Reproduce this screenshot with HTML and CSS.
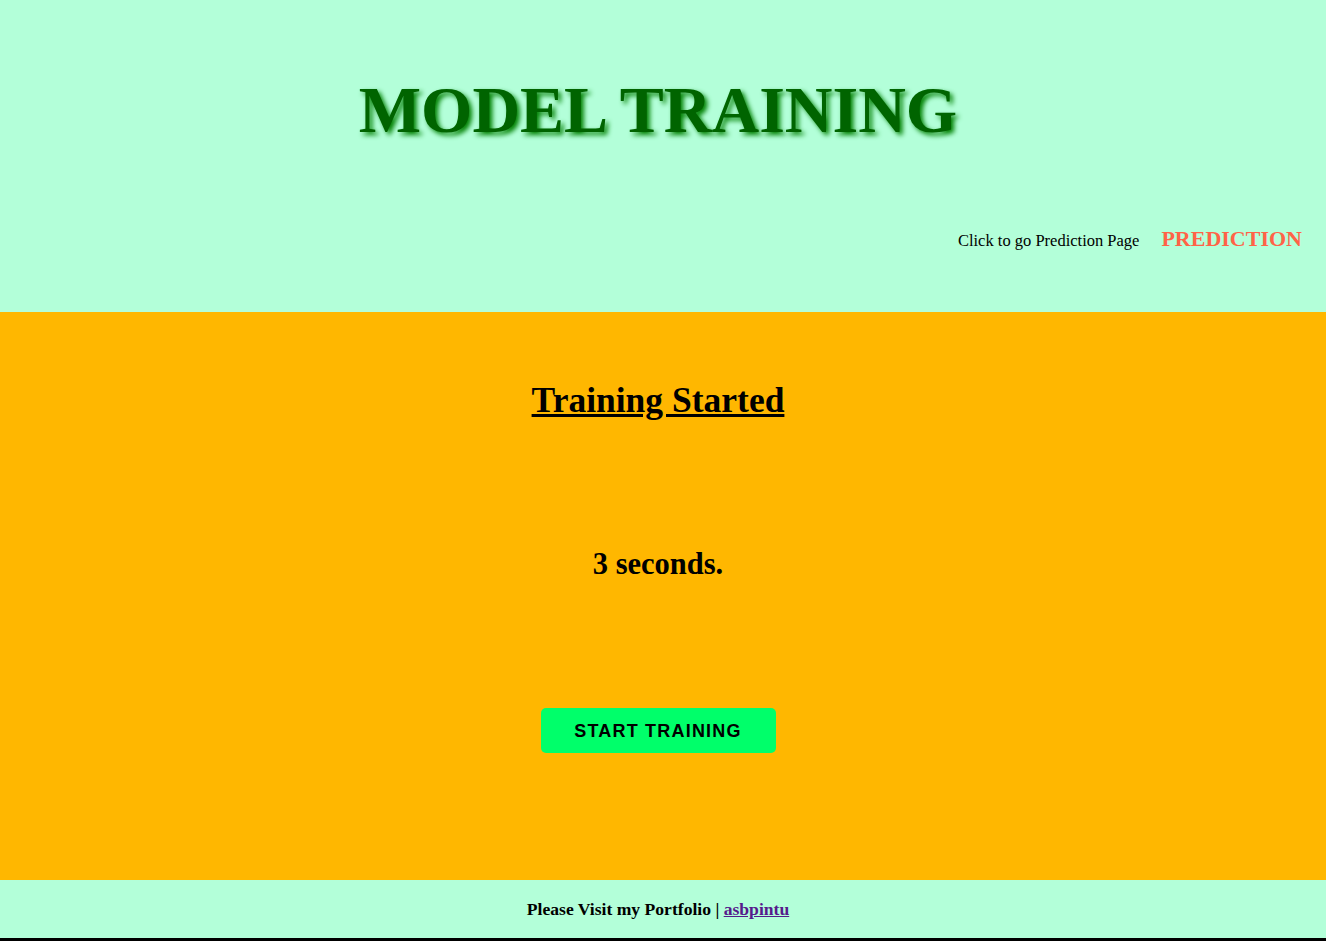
FILE: index.html
```html
<!DOCTYPE html>
<html>
<head>
<meta charset="utf-8">
<title>Model Training</title>
<link rel="stylesheet" href="styles.css">
</head>
<body>
<header class="top">
  <h1 class="title">MODEL TRAINING</h1>
  <nav class="nav">
    <span class="nav-text">Click to go Prediction Page</span>
    <a class="nav-link" href="#">PREDICTION</a>
  </nav>
</header>
<main class="panel">
  <h2 class="status">Training Started</h2>
  <p class="timer">3 seconds.</p>
  <button class="start">START TRAINING</button>
</main>
<footer class="foot">
  <span>Please Visit my Portfolio | <a class="foot-link" href="#">asbpintu</a></span>
</footer>
</body>
</html>
```

FILE: styles.css
```css
html, body {
  margin: 0;
  padding: 0;
}
body {
  font-family: "Liberation Serif", "Times New Roman", serif;
  color: #000;
  background: #b3ffd9;
}
.top {
  height: 312px;
  box-sizing: border-box;
  padding-top: 78px;
  display: flex;
  flex-direction: column;
  background: #b3ffd9;
}
.title {
  margin: 0;
  padding-right: 10px;
  text-align: center;
  font-size: 66px;
  line-height: 64px;
  font-weight: bold;
  color: #006400;
  text-shadow: 3px 3px 5px #008000;
}
.nav {
  margin-top: 83px;
  display: flex;
  justify-content: flex-end;
  align-items: center;
  gap: 22px;
  padding-right: 24px;
  height: 30px;
}
.nav-text {
  font-size: 16.5px;
  position: relative;
  top: 1px;
}
.nav-link {
  font-size: 22px;
  font-weight: bold;
  color: #ff6347;
  text-decoration: none;
  position: relative;
  top: -1px;
}
.panel {
  height: 568px;
  box-sizing: border-box;
  background: #ffb700;
  display: flex;
  flex-direction: column;
  align-items: center;
  padding-top: 67px;
  padding-right: 10px;
}
.status {
  margin: 0;
  font-size: 35.5px;
  line-height: 42px;
  font-weight: bold;
  text-decoration: underline;
}
.timer {
  margin: 125px 0 0;
  font-size: 30.5px;
  line-height: 36px;
  font-weight: bold;
}
.start {
  margin-top: 126px;
  width: 235px;
  height: 45px;
  border: none;
  border-radius: 5px;
  background: #00ff6a;
  color: #000;
  font-family: "Liberation Sans", Arial, sans-serif;
  font-weight: bold;
  font-size: 18px;
  letter-spacing: 1.2px;
  padding: 2px 0 0;
  cursor: pointer;
}
.foot {
  height: 58px;
  box-sizing: content-box;
  border-bottom: 3px solid #000;
  display: flex;
  align-items: center;
  justify-content: center;
  padding-right: 10px;
  font-size: 17.6px;
  font-weight: bold;
  background: #b3ffd9;
}
.foot-link {
  color: #551a8b;
}
```
